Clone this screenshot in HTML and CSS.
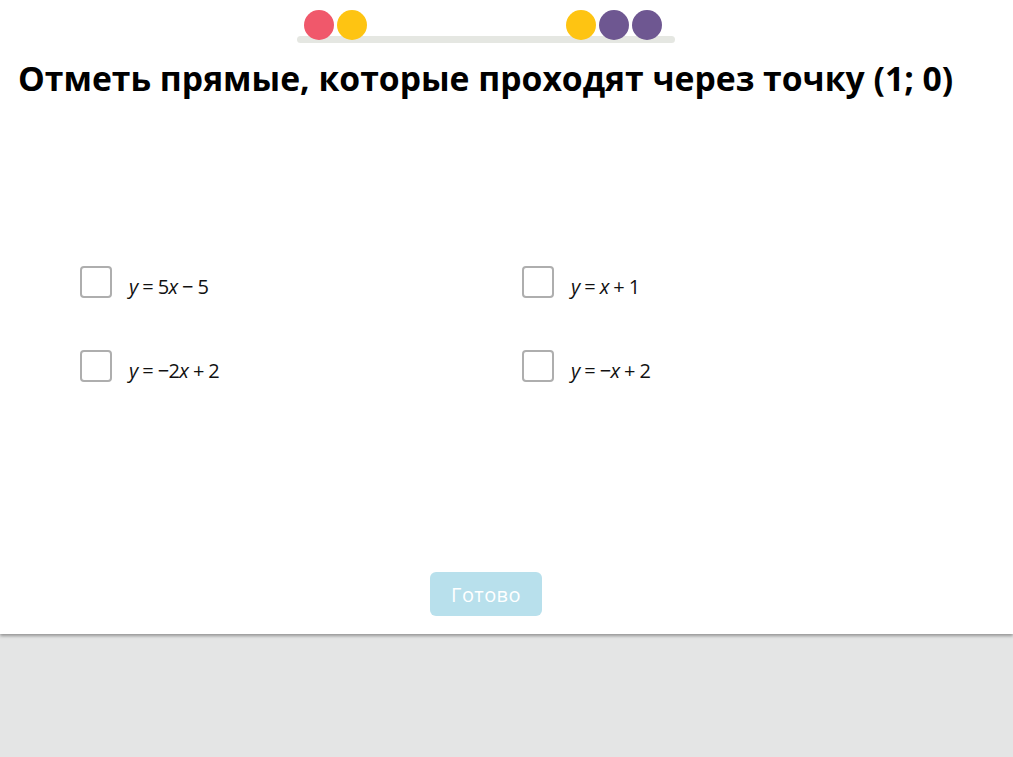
FILE: index.html
```html
<!DOCTYPE html>
<html lang="ru">
<head>
<meta charset="utf-8">
<title>Задание</title>
<link rel="stylesheet" href="styles.css">
</head>
<body>
<div class="page">
  <div class="progress">
    <div class="track"></div>
    <div class="dots">
      <div class="group">
        <span class="dot red"></span>
        <span class="dot yellow"></span>
      </div>
      <div class="group">
        <span class="dot yellow"></span>
        <span class="dot purple"></span>
        <span class="dot purple"></span>
      </div>
    </div>
  </div>
  <h1 class="title">Отметь прямые, которые проходят через точку (1; 0)</h1>
  <div class="options">
    <label class="option"><span class="box"></span><span class="formula"><i>y</i> = 5<i>x</i> − 5</span></label>
    <label class="option"><span class="box"></span><span class="formula"><i>y</i> = <i>x</i> + 1</span></label>
    <label class="option"><span class="box"></span><span class="formula"><i>y</i> = −2<i>x</i> + 2</span></label>
    <label class="option"><span class="box"></span><span class="formula"><i>y</i> = −<i>x</i> + 2</span></label>
  </div>
  <div class="actions">
    <button class="done">Готово</button>
  </div>
</div>
<div class="footer"></div>
</body>
</html>
```
FILE: styles.css
```css
html, body {
  margin: 0;
  padding: 0;
  background: #e4e5e5;
  font-family: "Open Sans", "Noto Sans", sans-serif;
}
.page {
  background: #ffffff;
  height: 634px;
  display: flex;
  flex-direction: column;
  box-shadow: 0 2px 3px rgba(0,0,0,0.35);
  position: relative;
}
.progress {
  position: relative;
  width: 378px;
  height: 44px;
  margin-left: 297px;
}
.track {
  position: absolute;
  left: 0;
  right: 0;
  top: 36px;
  height: 7px;
  border-radius: 4px;
  background: #e5e7e2;
}
.dots {
  position: absolute;
  left: 7px;
  right: 13px;
  top: 10px;
  display: flex;
  justify-content: space-between;
}
.group {
  display: flex;
  gap: 3px;
}
.dot {
  width: 30px;
  height: 30px;
  border-radius: 50%;
  display: block;
}
.red { background: #f0586b; }
.yellow { background: #fec412; }
.purple { background: #6e5791; }
.title {
  margin: 12px 0 0 18px;
  font-size: 33.7px;
  font-weight: 700;
  line-height: 44px;
  color: #000;
  white-space: nowrap;
}
.options {
  margin: 166px 0 0 80px;
  display: grid;
  grid-template-columns: 442px 442px;
  row-gap: 52px;
}
.option {
  display: flex;
  align-items: center;
  gap: 17px;
  height: 32px;
}
.box {
  width: 28px;
  height: 28px;
  border: 2px solid #aeaeae;
  border-radius: 4px;
  box-sizing: content-box;
  flex: none;
}
.formula {
  font-size: 20px;
  color: #111;
  padding-top: 8px;
  letter-spacing: -0.6px;
}
.formula i {
  font-style: italic;
}
.actions {
  margin-top: auto;
  margin-bottom: 18px;
  display: flex;
  justify-content: center;
}
.done {
  width: 112px;
  height: 44px;
  border: none;
  border-radius: 6px;
  background: #b8e0ec;
  color: #ffffff;
  font-family: "Open Sans", "Noto Sans", sans-serif;
  font-size: 20px;
  letter-spacing: 0.4px;
  margin-left: -41px;
}
.footer {
  height: 123px;
}
```
